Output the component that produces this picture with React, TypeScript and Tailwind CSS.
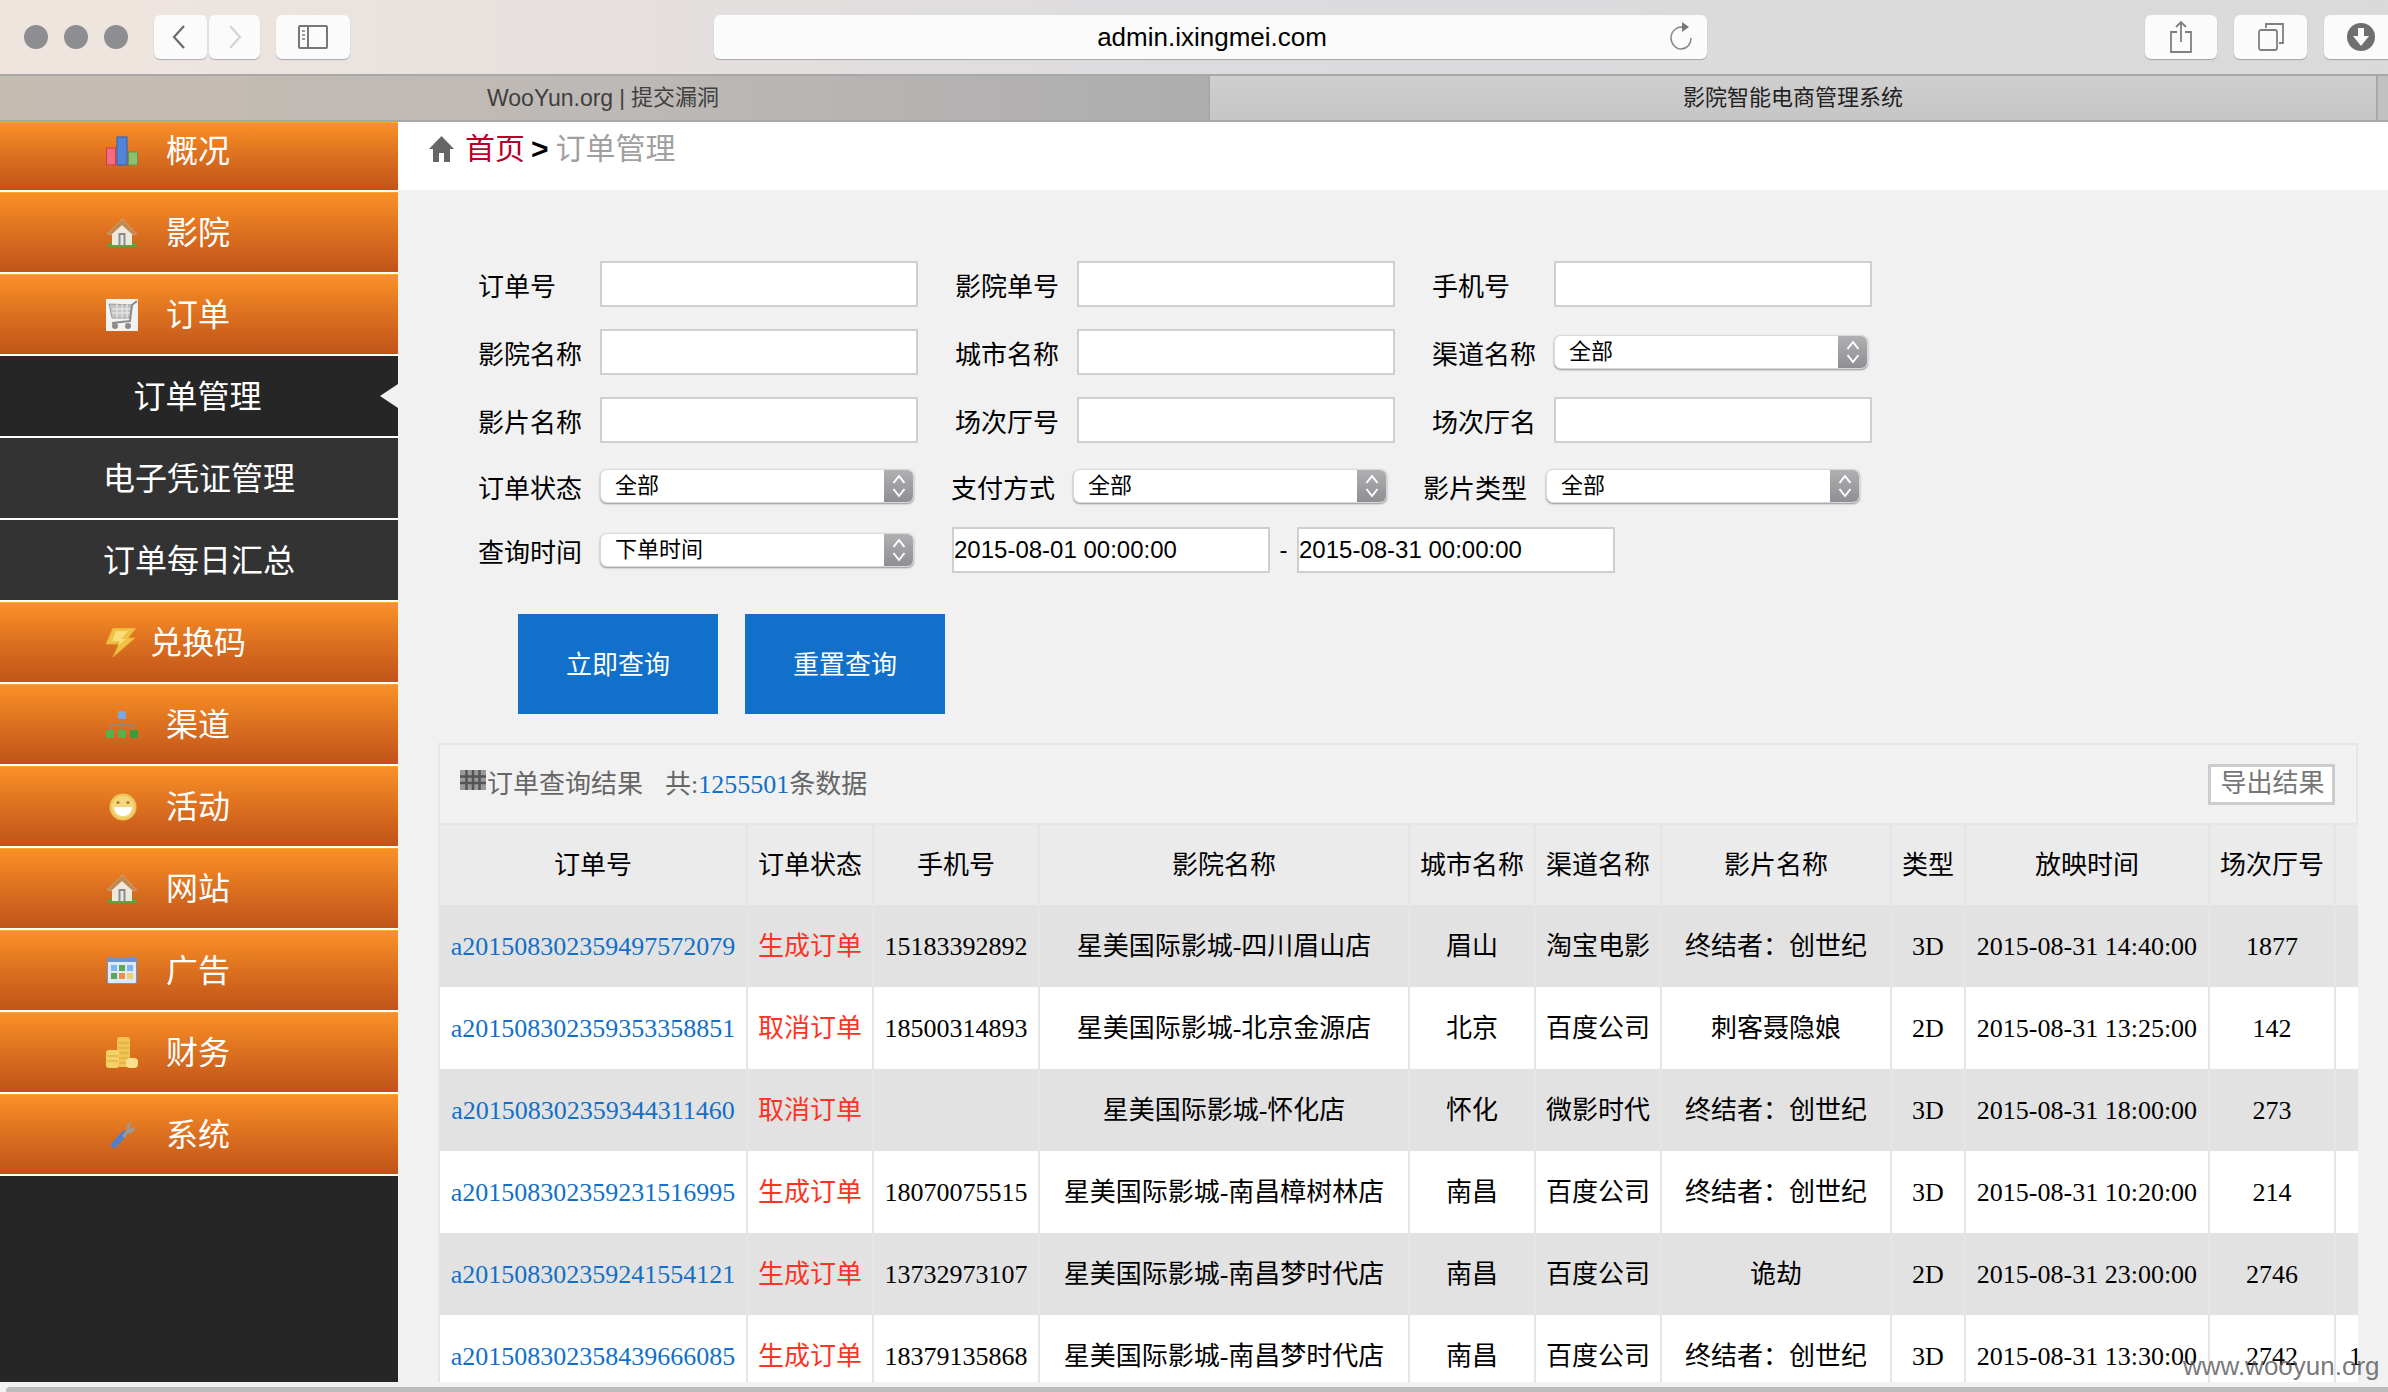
import type { ReactNode } from 'react';

const SANS = "[font-family:'Liberation_Sans','Noto_Sans_CJK_SC',sans-serif]";

function BarsIcon() {
  return (
    <svg viewBox="0 0 32 30" className="w-[32px] h-[30px]">
      <rect x="0.5" y="12" width="9" height="17" fill="#f26d7d" stroke="#d8344a" />
      <rect x="11" y="1" width="10" height="28" fill="#4f86dc" stroke="#2f5fb8" />
      <rect x="22.5" y="16" width="9" height="13" fill="#8dbf6c" stroke="#5e9a45" />
    </svg>
  );
}

function HouseIcon() {
  return (
    <svg viewBox="0 0 32 30" className="w-[32px] h-[30px]">
      <rect x="2" y="25" width="28" height="4" fill="#5aa53f" />
      <path d="M16 1 L31 16 L26 17 L26 27 L6 27 L6 17 L1 16 Z" fill="#efe9dc" />
      <path d="M16 1 L31 16 L27 17 L16 7 L5 17 L1 16 Z" fill="#bd8a52" />
      <rect x="12.5" y="15" width="7" height="12" fill="#8c8c8c" />
      <rect x="14.5" y="17" width="3" height="10" fill="#e8e8e8" />
    </svg>
  );
}

function CartIcon() {
  return (
    <svg viewBox="0 0 32 32" className="w-[32px] h-[32px]">
      <rect width="32" height="32" fill="#f3f3f3" />
      <path d="M3 5 L26 6 L24 19 L6 19 Z" fill="#c4c4c4" stroke="#9a9a9a" />
      <path d="M6 10 H26 M6 14 H25 M11 5 V19 M16 5 V19 M21 5 V19" stroke="#eee" strokeWidth="1" />
      <path d="M31 2 L26 6 L24 22 L6 24" fill="none" stroke="#8c8c8c" strokeWidth="2" />
      <circle cx="9" cy="27" r="3" fill="#8c8c8c" />
      <circle cx="22" cy="27" r="3" fill="#8c8c8c" />
    </svg>
  );
}

function BoltIcon() {
  return (
    <svg viewBox="0 0 32 30" className="w-[32px] h-[30px]">
      <path d="M7 0 L30 0 L22 10 L29 10 L7 29 L13 16 L0 16 Z" fill="#f0c244" stroke="#e9a93a" />
      <path d="M10 3 L22 3 L15 11 L20 11 L12 18 L14 13 L6 13 Z" fill="#f8dd7c" />
    </svg>
  );
}

function OrgIcon() {
  return (
    <svg viewBox="0 0 32 28" className="w-[32px] h-[28px]">
      <rect x="12" y="0" width="8" height="8" fill="#7aa7e0" />
      <path d="M16 8 V13 M5 19 V14 H27 V19 M16 13 V19" stroke="#8f8a80" strokeWidth="1.5" fill="none" />
      <rect x="0" y="19" width="8" height="8" fill="#57b04a" />
      <rect x="12" y="19" width="8" height="8" fill="#57b04a" />
      <rect x="24" y="19" width="8" height="8" fill="#3c9a3a" />
    </svg>
  );
}

function SmileIcon() {
  return (
    <svg viewBox="0 0 28 28" className="w-[28px] h-[28px] ml-[2px]">
      <circle cx="14" cy="14" r="13.5" fill="#efc45a" />
      <circle cx="14" cy="14" r="11" fill="#f5d77e" />
      <circle cx="9" cy="9.5" r="1.5" fill="#a57a2c" />
      <circle cx="19" cy="9.5" r="1.5" fill="#a57a2c" />
      <path d="M5 14 H23 C22 21 18 23 14 23 C10 23 6 21 5 14 Z" fill="#fff" />
    </svg>
  );
}

function GridIcon() {
  return (
    <svg viewBox="0 0 30 27" className="w-[30px] h-[27px]">
      <rect x="0.5" y="0.5" width="29" height="26" rx="1.5" fill="#dfe9f6" stroke="#6d94cc" />
      <rect x="1" y="1" width="28" height="4" fill="#6d94cc" />
      <rect x="4" y="8" width="6" height="6" fill="#7db7f0" />
      <rect x="12" y="8" width="6" height="6" fill="#5aa855" />
      <rect x="20" y="8" width="6" height="6" fill="#7db7f0" />
      <rect x="4" y="16" width="6" height="6" fill="#5aa855" />
      <rect x="12" y="16" width="6" height="6" fill="#ef8d4a" />
      <rect x="20" y="16" width="6" height="6" fill="#efcf6a" />
    </svg>
  );
}

function CoinsIcon() {
  return (
    <svg viewBox="0 0 32 32" className="w-[32px] h-[32px]">
      <rect x="11" y="0" width="13" height="30" rx="3" fill="#f1c555" />
      <path d="M12 6 H23 M12 11 H23 M12 16 H23 M12 21 H23 M12 26 H23" stroke="#d9a53a" />
      <rect x="0" y="13" width="13" height="18" rx="3" fill="#f5d265" />
      <path d="M1 19 H12 M1 24 H12" stroke="#d9a53a" />
      <rect x="20" y="21" width="12" height="10" rx="4" fill="#fae08e" />
    </svg>
  );
}

function WrenchIcon() {
  return (
    <svg viewBox="0 0 32 28" className="w-[32px] h-[28px]">
      <path d="M8 24 L18 13" stroke="#4f7fd1" strokeWidth="6" strokeLinecap="round" />
      <path d="M16 15 L21 9 C19 5 22 1 26 1 L23 5 L25 8 L29 6 C29 10 26 13 22 12 L19 17 Z" fill="#9a9a9a" />
    </svg>
  );
}

const menus: { label: string; icon: ReactNode }[] = [
  { label: '概况', icon: <BarsIcon /> },
  { label: '影院', icon: <HouseIcon /> },
  { label: '订单', icon: <CartIcon /> },
];

const menusBottom: { label: string; icon: ReactNode; tight?: boolean }[] = [
  { label: '兑换码', icon: <BoltIcon />, tight: true },
  { label: '渠道', icon: <OrgIcon /> },
  { label: '活动', icon: <SmileIcon /> },
  { label: '网站', icon: <HouseIcon /> },
  { label: '广告', icon: <GridIcon /> },
  { label: '财务', icon: <CoinsIcon /> },
  { label: '系统', icon: <WrenchIcon /> },
];

function OrangeItem({ label, icon, tight, first }: { label: string; icon: ReactNode; tight?: boolean; first?: boolean }) {
  return (
    <div
      className={`flex items-center pl-[106px] border-t border-[#ffa52e] bg-gradient-to-b from-[#fa9126] via-[#dc7020] to-[#c05418] text-white text-[32px] ${
        first ? 'h-[68px] pb-[12px]' : 'h-[80px]'
      }`}
    >
      <div className="w-[32px] flex justify-center shrink-0">{icon}</div>
      <span className={tight ? 'ml-[12px]' : 'ml-[28px]'}>{label}</span>
    </div>
  );
}

function Sidebar() {
  return (
    <aside className="w-[398px] shrink-0 bg-[#262626] flex flex-col gap-[2px]">
      <div className="bg-white flex flex-col gap-[2px]">
        {menus.map((m, i) => (
          <OrangeItem key={m.label} label={m.label} icon={m.icon} first={i === 0} />
        ))}
        <div className="relative h-[80px] bg-[#262626] text-white text-[32px] flex items-center justify-center">
          <span className="-ml-[3px] mt-[2px]">订单管理</span>
          <svg viewBox="0 0 18 24" className="absolute right-0 top-[28px] w-[18px] h-[24px]">
            <path d="M0 12 L18 0 V24 Z" fill="#f1f1f1" />
          </svg>
        </div>
        <div className="h-[80px] bg-[#333333] text-white text-[32px] flex items-center justify-center pt-[2px]">电子凭证管理</div>
        <div className="h-[80px] bg-[#333333] text-white text-[32px] flex items-center justify-center pt-[2px]">订单每日汇总</div>
        {menusBottom.map((m) => (
          <OrangeItem key={m.label} label={m.label} icon={m.icon} tight={m.tight} />
        ))}
        <div className="h-0" />
      </div>
    </aside>
  );
}

function Toolbtn({ className, children }: { className: string; children: ReactNode }) {
  return (
    <div className={`h-[44px] rounded-[6px] bg-[#fbfbfb] shadow-[0_1px_1px_rgba(0,0,0,0.25)] flex items-center justify-center shrink-0 ${className}`}>
      {children}
    </div>
  );
}

function BrowserBar() {
  return (
    <header className={SANS}>
      <div className="h-[74px] flex items-center bg-gradient-to-r from-[#f0e6df] via-[#dcdbde] to-[#dadada] relative overflow-hidden">
        <div className="flex gap-[16px] ml-[24px] shrink-0">
          <span className="w-[24px] h-[24px] rounded-full bg-[#8d8d92]" />
          <span className="w-[24px] h-[24px] rounded-full bg-[#8d8d92]" />
          <span className="w-[24px] h-[24px] rounded-full bg-[#8d8d92]" />
        </div>
        <Toolbtn className="w-[53px] ml-[26px]">
          <svg viewBox="0 0 16 26" className="w-[16px] h-[26px] -ml-[3px]">
            <path d="M13 2 L3 13 L13 24" fill="none" stroke="#6b6b6b" strokeWidth="2.2" />
          </svg>
        </Toolbtn>
        <Toolbtn className="w-[51px] ml-[2px]">
          <svg viewBox="0 0 16 26" className="w-[16px] h-[26px]">
            <path d="M3 2 L13 13 L3 24" fill="none" stroke="#d4d4d4" strokeWidth="2.2" />
          </svg>
        </Toolbtn>
        <Toolbtn className="w-[74px] ml-[16px]">
          <svg viewBox="0 0 30 24" className="w-[30px] h-[24px]">
            <rect x="1" y="1" width="28" height="22" rx="1" fill="none" stroke="#777" strokeWidth="2" />
            <path d="M10 1 V23" stroke="#777" strokeWidth="2" />
            <path d="M4 6 H7 M4 10 H7 M4 14 H7" stroke="#999" strokeWidth="2" />
          </svg>
        </Toolbtn>
        <div className="ml-[364px] w-[993px] h-[44px] rounded-[6px] bg-[#fbfbfb] shadow-[0_1px_1px_rgba(0,0,0,0.25)] relative flex items-center justify-center pl-[3px] text-[26px] text-black shrink-0">
          admin.ixingmei.com
          <svg viewBox="0 0 24 30" className="absolute right-[14px] top-[7px] w-[24px] h-[30px]">
            <path d="M15 5 C8 4 2 9 2 16 C2 22 7 27 12 27 C18 27 22 22 22 16" fill="none" stroke="#8a8a8a" strokeWidth="1.6" />
            <path d="M13 0 L20 5 L13 10 Z" fill="#777" />
          </svg>
        </div>
        <Toolbtn className="w-[72px] ml-[438px]">
          <svg viewBox="0 0 24 34" className="w-[24px] h-[34px]">
            <path d="M8 12 H2 V32 H22 V12 H16" fill="none" stroke="#808080" strokeWidth="1.8" />
            <path d="M12 22 V2 M7 7 L12 2 L17 7" fill="none" stroke="#808080" strokeWidth="1.8" />
          </svg>
        </Toolbtn>
        <Toolbtn className="w-[73px] ml-[17px]">
          <svg viewBox="0 0 26 28" className="w-[26px] h-[28px]">
            <path d="M8 5 V1 H25 V20 H21" fill="none" stroke="#808080" strokeWidth="1.8" />
            <rect x="1" y="7" width="18" height="20" rx="2" fill="none" stroke="#808080" strokeWidth="1.8" />
          </svg>
        </Toolbtn>
        <Toolbtn className="w-[80px] ml-[17px] rounded-r-none">
          <svg viewBox="0 0 28 28" className="w-[28px] h-[28px] mr-[6px]">
            <circle cx="14" cy="14" r="14" fill="#6f6f6f" />
            <path d="M11 5 H17 V13 H22 L14 23 L6 13 H11 Z" fill="#fbfbfb" />
          </svg>
        </Toolbtn>
      </div>
      <div className="h-[48px] flex border-y-2 border-[#a9a8a9] text-[22px] leading-none">
        <div className="w-[1210px] bg-gradient-to-r from-[#c6bcb2] via-[#bdb9b6] to-[#aeadae] flex items-center pl-[487px] text-[#3f3f3f] border-r-2 border-[#a9a8a9]">
          <span className="text-[23px]">WooYun.org</span>
          <span className="ml-[6px]">| 提交漏洞</span>
        </div>
        <div className="flex-1 bg-gradient-to-b from-[#d0cfd0] to-[#c6c5c6] flex items-center justify-center text-[#222]">
          影院智能电商管理系统
        </div>
        <div className="w-[12px] bg-[#c2c1c2] border-l-2 border-[#a9a8a9]" />
      </div>
    </header>
  );
}

function Label({ className, children }: { className?: string; children: ReactNode }) {
  return <span className={`text-[26px] text-black leading-none whitespace-nowrap pt-[7px] -indent-[1px] ${className ?? 'w-[121px]'}`}>{children}</span>;
}

function TextInput({ value, className }: { value?: string; className?: string }) {
  return (
    <input
      readOnly
      value={value ?? ''}
      className={`w-[318px] h-[46px] bg-white border-2 border-[#cfcfcf] px-0 text-[24px] text-black outline-none shrink-0 ${SANS} ${className ?? ''}`}
    />
  );
}

function SelectBox({ value, className }: { value: string; className?: string }) {
  return (
    <div className={`h-[34px] w-[314px] rounded-[7px] bg-white border border-[#d8d8d8] shadow-[0_1px_2px_rgba(0,0,0,0.4)] flex items-center overflow-hidden shrink-0 ${className ?? ''}`}>
      <span className="pl-[14px] text-[22px] leading-none text-black">{value}</span>
      <span className="ml-auto w-[29px] h-full bg-gradient-to-b from-[#b0b0b3] to-[#8f8f93] flex items-center justify-center">
        <svg viewBox="0 0 14 26" className="w-[14px] h-[26px]">
          <path d="M1.5 10 L7 3 L12.5 10 M1.5 16 L7 23 L12.5 16" fill="none" stroke="#fff" strokeWidth="2" />
        </svg>
      </span>
    </div>
  );
}

function SearchForm() {
  return (
    <div className="pt-[71px] pl-[81px] flex flex-col">
      <div className="flex items-center h-[46px]">
        <Label>订单号</Label>
        <TextInput />
        <Label className="w-[121px] ml-[38px]">影院单号</Label>
        <TextInput />
        <Label className="w-[121px] ml-[38px]">手机号</Label>
        <TextInput />
      </div>
      <div className="flex items-center h-[46px] mt-[22px]">
        <Label>影院名称</Label>
        <TextInput />
        <Label className="w-[121px] ml-[38px]">城市名称</Label>
        <TextInput />
        <Label className="w-[121px] ml-[38px]">渠道名称</Label>
        <SelectBox value="全部" className="w-[313px]" />
      </div>
      <div className="flex items-center h-[46px] mt-[22px]">
        <Label>影片名称</Label>
        <TextInput />
        <Label className="w-[121px] ml-[38px]">场次厅号</Label>
        <TextInput />
        <Label className="w-[121px] ml-[38px]">场次厅名</Label>
        <TextInput />
      </div>
      <div className="flex items-center h-[34px] mt-[26px]">
        <Label>订单状态</Label>
        <SelectBox value="全部" />
        <Label className="w-[121px] ml-[38px]">支付方式</Label>
        <SelectBox value="全部" />
        <Label className="w-[122px] ml-[37px]">影片类型</Label>
        <SelectBox value="全部" />
      </div>
      <div className="flex items-center h-[46px] mt-[24px]">
        <Label>查询时间</Label>
        <SelectBox value="下单时间" />
        <TextInput value="2015-08-01 00:00:00" className="ml-[38px]" />
        <span className={`w-[27px] text-center text-[24px] leading-none ${SANS}`}>-</span>
        <TextInput value="2015-08-31 00:00:00" />
      </div>
      <div className="flex gap-[27px] mt-[41px] ml-[39px]">
        <button className="w-[200px] h-[100px] pt-[2px] bg-[#1170c9] text-white text-[26px]">立即查询</button>
        <button className="w-[200px] h-[100px] pt-[2px] bg-[#1170c9] text-white text-[26px]">重置查询</button>
      </div>
    </div>
  );
}

const columns = ['订单号', '订单状态', '手机号', '影院名称', '城市名称', '渠道名称', '影片名称', '类型', '放映时间', '场次厅号'];

const orders = [
  ['a201508302359497572079', '生成订单', '15183392892', '星美国际影城-四川眉山店', '眉山', '淘宝电影', '终结者：创世纪', '3D', '2015-08-31 14:40:00', '1877', ''],
  ['a201508302359353358851', '取消订单', '18500314893', '星美国际影城-北京金源店', '北京', '百度公司', '刺客聂隐娘', '2D', '2015-08-31 13:25:00', '142', ''],
  ['a201508302359344311460', '取消订单', '', '星美国际影城-怀化店', '怀化', '微影时代', '终结者：创世纪', '3D', '2015-08-31 18:00:00', '273', ''],
  ['a201508302359231516995', '生成订单', '18070075515', '星美国际影城-南昌樟树林店', '南昌', '百度公司', '终结者：创世纪', '3D', '2015-08-31 10:20:00', '214', ''],
  ['a201508302359241554121', '生成订单', '13732973107', '星美国际影城-南昌梦时代店', '南昌', '百度公司', '诡劫', '2D', '2015-08-31 23:00:00', '2746', ''],
  ['a201508302358439666085', '生成订单', '18379135868', '星美国际影城-南昌梦时代店', '南昌', '百度公司', '终结者：创世纪', '3D', '2015-08-31 13:30:00', '2742', '1'],
];

function ResultTable() {
  return (
    <div className="mt-[29px] ml-[40px] w-[1920px]">
      <div className="h-[82px] border-2 border-[#e5e5e5] flex items-center text-[26px] text-[#666666]">
        <svg viewBox="0 0 26 20" className="w-[26px] h-[20px] ml-[20px] -mt-[8px] shrink-0">
          <rect width="26" height="20" fill="#9a9a9c" />
          <path d="M6.5 0 V20 M13 0 V20 M19.5 0 V20 M0 6.5 H26 M0 13 H26" stroke="#555" strokeWidth="2.5" />
        </svg>
        <span className="ml-[1px]">订单查询结果</span>
        <span className="ml-[22px]">共:</span>
        <span className="text-[#1170c9]">1255501</span>
        <span>条数据</span>
        <button className="ml-auto mr-[21px] w-[127px] h-[41px] pl-[2px] bg-white border-[3px] border-[#cccccc] text-[#777777] text-[26px] leading-none">
          导出结果
        </button>
      </div>
      <table className="table-fixed border-separate border-spacing-0 w-[1920px] text-[26px] text-black">
        <colgroup>
          <col className="w-[310px]" />
          <col className="w-[126px]" />
          <col className="w-[166px]" />
          <col className="w-[370px]" />
          <col className="w-[126px]" />
          <col className="w-[126px]" />
          <col className="w-[230px]" />
          <col className="w-[74px]" />
          <col className="w-[244px]" />
          <col className="w-[126px]" />
          <col className="w-[22px]" />
        </colgroup>
        <thead>
          <tr className="h-[80px] bg-[#ebebeb]">
            {columns.map((c, i) => (
              <th key={c} className={`font-normal whitespace-nowrap p-0 border-r-2 border-[#e5e5e5] ${i === 0 ? 'border-l-2' : ''}`}>
                {c}
              </th>
            ))}
            <th className="p-0" />
          </tr>
        </thead>
        <tbody>
          {orders.map((row, r) => (
            <tr key={row[0]} className={`h-[82px] ${r % 2 === 0 ? 'bg-[#e2e2e2]' : 'bg-white'}`}>
              {row.map((cell, i) => {
                let cellClass = 'border-r-2 text-center';
                if (i === 0) cellClass = 'border-r-2 border-l-2 text-center text-[#1170c9]';
                if (i === 1) cellClass = 'border-r-2 text-center text-[#ff3322]';
                if (i === 10) cellClass = 'text-left pl-[13px]';
                return (
                  <td key={i} className={`p-0 whitespace-nowrap border-[#e5e5e5] ${cellClass}`}>
                    {cell}
                  </td>
                );
              })}
            </tr>
          ))}
        </tbody>
      </table>
    </div>
  );
}

export default function App() {
  return (
    <div className="w-[2388px] h-[1392px] overflow-hidden relative flex flex-col bg-[#f1f1f1] [font-family:'Liberation_Serif','Noto_Sans_CJK_SC',serif]">
      <BrowserBar />
      <div className="flex h-[1260px] overflow-hidden shrink-0">
        <Sidebar />
        <main className="flex-1 min-w-0 overflow-hidden">
          <div className="h-[68px] bg-white flex items-center pl-[31px] pb-[14px] text-[30px] leading-none">
            <svg viewBox="0 0 25 26" className="w-[25px] h-[26px] shrink-0">
              <path d="M12.5 0 L25 13 L21 13 L21 26 L15 26 L15 17 L10 17 L10 26 L4 26 L4 13 L0 13 Z" fill="#666666" />
            </svg>
            <span className="ml-[11px] text-[#b5002a]">首页</span>
            <span className={`ml-[6px] text-black font-bold ${SANS}`}>&gt;</span>
            <span className="ml-[7px] text-[#a0a0a0]">订单管理</span>
          </div>
          <SearchForm />
          <ResultTable />
        </main>
      </div>
      <div className="h-[10px] bg-[#f2f2f2] pt-[5px] pl-[6px]">
        <div className="h-[5px] rounded-tl-[4px] bg-[#bcbcbc]" />
      </div>
      <span className={`absolute left-[2183px] top-[1350px] text-[26px] leading-[32px] text-[#555555]/80 ${SANS}`}>www.wooyun.org</span>
    </div>
  );
}
